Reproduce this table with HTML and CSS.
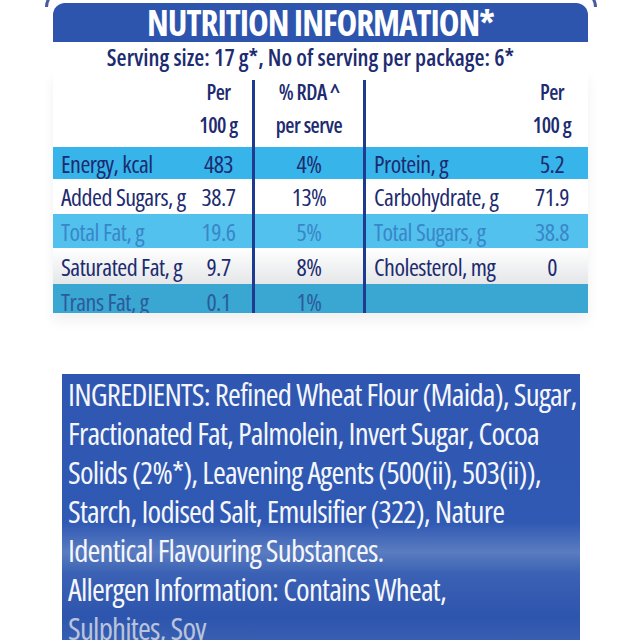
FILE: index.html
```html
<!DOCTYPE html>
<html>
<head>
<meta charset="utf-8">
<link rel="stylesheet" href="styles.css">
</head>
<body>
<div class="page">
  <div class="frame-arc"></div>
  <section class="nutrition">
    <h1 class="title">NUTRITION INFORMATION*</h1>
    <p class="serving">Serving size: 17 g*, No of serving per package: 6*</p>
    <div class="table">
      <div class="row head">
        <span class="lbl"></span>
        <span class="val">Per<br>100 g</span>
        <span class="rule"></span>
        <span class="rda">% RDA ^<br>per serve</span>
        <span class="rule"></span>
        <span class="lbl"></span>
        <span class="val">Per<br>100 g</span>
      </div>
      <div class="row r1">
        <span class="lbl">Energy, kcal</span><span class="val">483</span><span class="rule"></span>
        <span class="rda">4%</span><span class="rule"></span>
        <span class="lbl">Protein, g</span><span class="val">5.2</span>
      </div>
      <div class="row r2">
        <span class="lbl">Added Sugars, g</span><span class="val">38.7</span><span class="rule"></span>
        <span class="rda">13%</span><span class="rule"></span>
        <span class="lbl">Carbohydrate, g</span><span class="val">71.9</span>
      </div>
      <div class="row r3">
        <span class="lbl">Total Fat, g</span><span class="val">19.6</span><span class="rule"></span>
        <span class="rda">5%</span><span class="rule"></span>
        <span class="lbl">Total Sugars, g</span><span class="val">38.8</span>
      </div>
      <div class="row r4">
        <span class="lbl">Saturated Fat, g</span><span class="val">9.7</span><span class="rule"></span>
        <span class="rda">8%</span><span class="rule"></span>
        <span class="lbl">Cholesterol, mg</span><span class="val">0</span>
      </div>
      <div class="row r5">
        <span class="lbl">Trans Fat, g</span><span class="val">0.1</span><span class="rule"></span>
        <span class="rda">1%</span><span class="rule"></span>
        <span class="lbl"></span><span class="val"></span>
      </div>
    </div>
  </section>
  <section class="ingredients">
    <p>INGREDIENTS: Refined Wheat Flour (Maida), Sugar,<br>
    Fractionated Fat, Palmolein, Invert Sugar, Cocoa<br>
    Solids (2%*), Leavening Agents (500(ii), 503(ii)),<br>
    Starch, Iodised Salt, Emulsifier (322), Nature<br>
    Identical Flavouring Substances.<br>
    Allergen Information: Contains Wheat,<br>
    <span class="fade">Sulphites, Soy</span></p>
  </section>
</div>
</body>
</html>
```
FILE: styles.css
```css
html, body {
  margin: 0;
  padding: 0;
  background: #ffffff;
}
.page {
  position: relative;
  width: 640px;
  height: 640px;
  overflow: hidden;
  background: #ffffff;
}
.frame-arc {
  position: absolute;
  left: 45px;
  top: -10px;
  width: 546px;
  height: 14px;
  border: 3px solid #2a3f8f;
  border-bottom: none;
  border-top-left-radius: 20px;
  border-top-right-radius: 20px;
  opacity: 0.85;
}
.nutrition {
  position: relative;
  margin: 3px 0 0 53px;
  width: 535px;
  font-family: "Open Sans", "DejaVu Sans Condensed", sans-serif;
  font-stretch: 75%;
  color: #1d2b70;
  background: #ffffff;
}
.title {
  margin: 0;
  height: 39px;
  line-height: 39px;
  background: #2d55ad;
  border-radius: 12px 12px 0 0;
  color: #ffffff;
  font-size: 35px;
  font-weight: 700;
  letter-spacing: -1px;
  text-align: center;
}
.serving {
  margin: 0;
  height: 28px;
  line-height: 30px;
  font-size: 23px;
  font-weight: 600;
  letter-spacing: 0;
  text-align: center;
  padding-right: 20px;
}
.table {
  display: flex;
  flex-direction: column;
  box-shadow: 0 8px 12px rgba(0, 0, 0, 0.06);
}
.row {
  display: grid;
  grid-template-columns: 140px 59px 3px 108px 3px 158px 64px;
  height: 34px;
  font-size: 24px;
  font-weight: 500;
  letter-spacing: -0.5px;
  overflow: hidden;
}
.row > span {
  height: 100%;
  display: flex;
  align-items: center;
  white-space: nowrap;
}
.lbl { padding-left: 8px; }
.val { justify-content: center; padding-right: 8px; }
.rda { justify-content: center; }
.rule { background: #1e3b8f; }
.head {
  height: 77px;
  font-size: 21px;
  font-weight: 600;
  line-height: 33px;
}
.head > span {
  text-align: center;
  align-items: flex-end;
  padding-bottom: 5px;
  box-sizing: border-box;
}
.head .rule { margin-top: 10px; height: auto; }
.r1 { background: #37b5ea; height: 32px; }
.r2 { background: #ffffff; height: 35px; }
.r3 { background: #52c1ee; color: #3a86c8; }
.r4 { background: linear-gradient(#ffffff, #e4e6e8); height: 36px; }
.r5 { background: #3aa6d2; color: #2b5b9b; height: 29px; }
.r5 > span { height: 34px; }
.ingredients {
  margin: 61px 0 0 62px;
  width: 518px;
  height: 270px;
  background: linear-gradient(#2f57b2 0%, #3059b3 55%, #5a7cc0 66%, #3a61b4 74%, #2e55ad 90%, #3a60b3 100%);
  font-family: "Open Sans", sans-serif;
  font-stretch: 75%;
  color: #f4f6fb;
}
.ingredients p {
  margin: 0;
  padding: 1px 0 0 6px;
  font-size: 31px;
  font-weight: 500;
  line-height: 39px;
  letter-spacing: -0.8px;
  white-space: nowrap;
}
.fade { color: #b8c4dc; }
```
